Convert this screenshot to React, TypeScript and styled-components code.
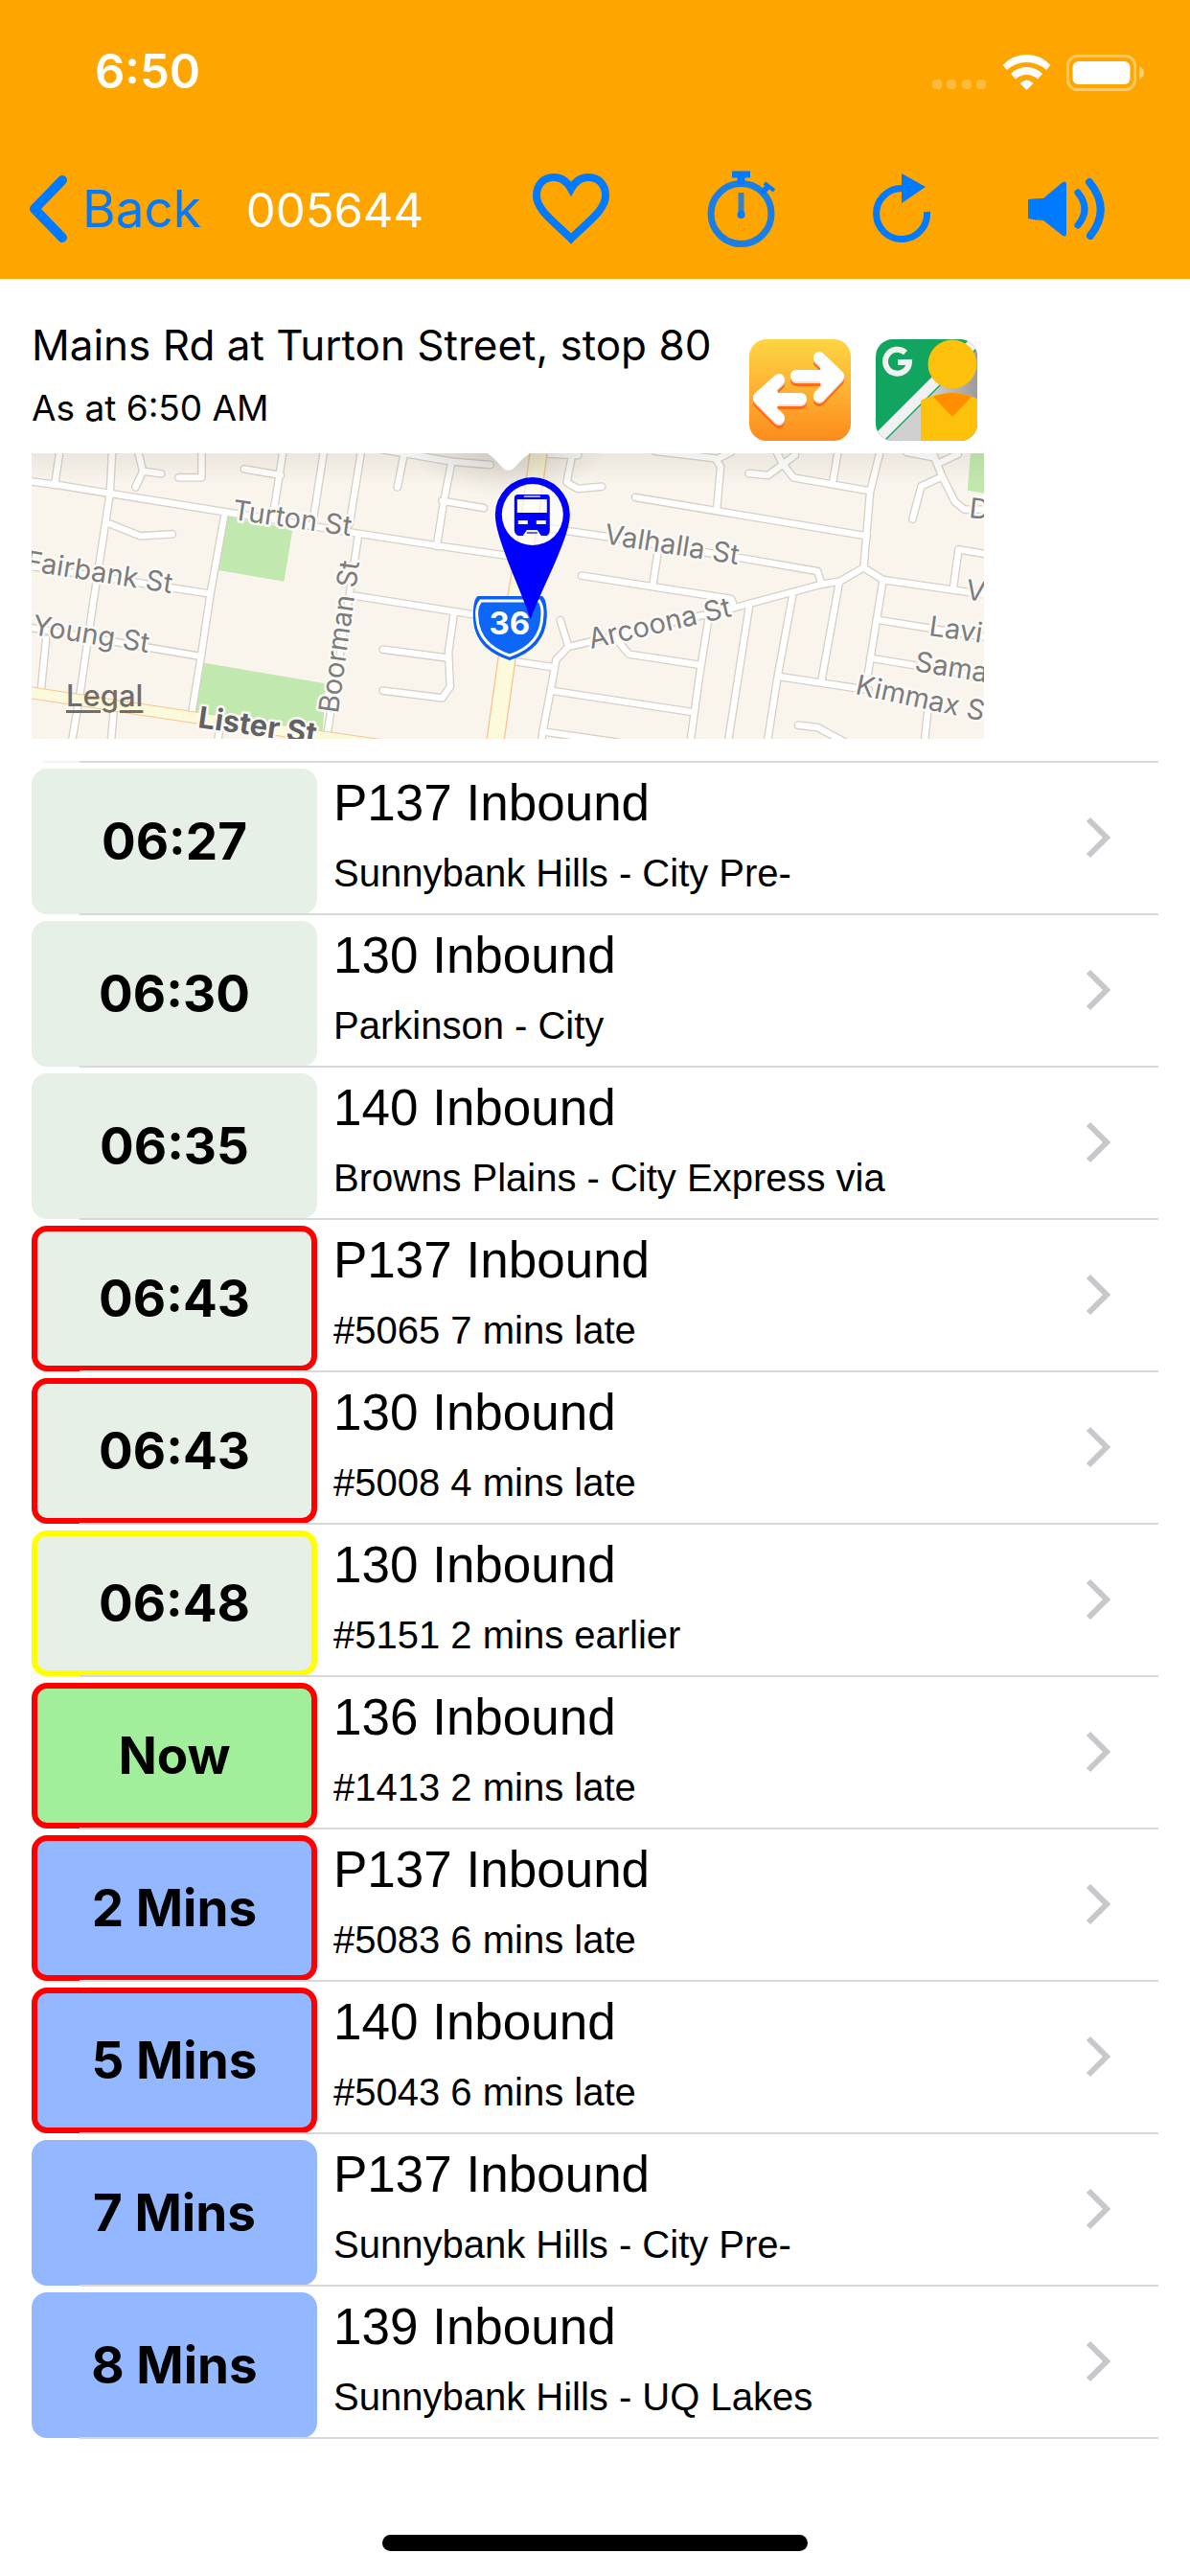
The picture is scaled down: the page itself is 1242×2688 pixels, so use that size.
import React from "react";
import styled, { createGlobalStyle } from "styled-components";

interface Departure {
  due: string;
  route: string;
  detail: string;
  state: "past" | "now" | "soon";
  outline?: string;
}

const departures: Departure[] = [
  { due: "06:27", route: "P137 Inbound", detail: "Sunnybank Hills - City Pre-", state: "past" },
  { due: "06:30", route: "130 Inbound", detail: "Parkinson - City", state: "past" },
  { due: "06:35", route: "140 Inbound", detail: "Browns Plains - City Express via", state: "past" },
  { due: "06:43", route: "P137 Inbound", detail: "#5065 7 mins late", state: "past", outline: "#ff0000" },
  { due: "06:43", route: "130 Inbound", detail: "#5008 4 mins late", state: "past", outline: "#ff0000" },
  { due: "06:48", route: "130 Inbound", detail: "#5151 2 mins earlier", state: "past", outline: "#ffff00" },
  { due: "Now", route: "136 Inbound", detail: "#1413 2 mins late", state: "now", outline: "#ff0000" },
  { due: "2 Mins", route: "P137 Inbound", detail: "#5083 6 mins late", state: "soon", outline: "#ff0000" },
  { due: "5 Mins", route: "140 Inbound", detail: "#5043 6 mins late", state: "soon", outline: "#ff0000" },
  { due: "7 Mins", route: "P137 Inbound", detail: "Sunnybank Hills - City Pre-", state: "soon" },
  { due: "8 Mins", route: "139 Inbound", detail: "Sunnybank Hills - UQ Lakes", state: "soon" },
];

const stateColors = {
  past: "#e6f0e6",
  now: "#a1ee9b",
  soon: "#94b8ff",
};

const GlobalStyle = createGlobalStyle`
  * {
    box-sizing: border-box;
  }
  body {
    margin: 0;
    background: #fff;
    color: #000;
    font-family: Inter, "Liberation Sans", sans-serif;
  }
`;

const Page = styled.div`
  min-height: 100vh;
  display: flex;
  flex-direction: column;
`;

const Header = styled.header`
  background: #ffa500;
  padding-bottom: 6px;
`;

const StatusBar = styled.div`
  height: 150px;
  padding: 0 47px 0 99px;
  display: flex;
  align-items: center;
  justify-content: space-between;
  color: #fff;
`;

const Clock = styled.span`
  font-size: 49px;
  line-height: 60px;
  font-weight: 600;
`;

const NavBar = styled.nav`
  height: 135px;
  padding: 0 89px 0 30px;
  display: flex;
  align-items: center;
`;

const BackButton = styled.button`
  display: flex;
  align-items: center;
  gap: 15px;
  padding: 0;
  border: 0;
  background: none;
  color: #007aff;
  font-family: inherit;
  font-size: 53px;
  line-height: 60px;
`;

const StopNumber = styled.h1`
  margin: 0 0 0 47px;
  padding-top: 4px;
  color: #fff;
  font-size: 49px;
  line-height: 60px;
  font-weight: 400;
`;

const Actions = styled.div`
  margin-left: auto;
  display: flex;
  align-items: center;
  gap: 102px;
`;

const IconButton = styled.button`
  display: flex;
  padding: 0;
  border: 0;
  background: none;
  color: #007aff;
`;

const StopPanel = styled.section`
  width: 80%;
  margin-left: 33px;
`;

const StopHead = styled.div`
  display: flex;
  align-items: flex-end;
  justify-content: space-between;
  padding: 41px 7px 13px 0;
`;

const StopText = styled.div`
  padding-bottom: 12px;
`;

const StopName = styled.h2`
  margin: 0 0 16px;
  font-size: 44px;
  line-height: 56px;
  font-weight: 400;
  white-space: nowrap;
`;

const AsAt = styled.p`
  margin: 0;
  font-size: 37px;
  line-height: 44px;
`;

const AppButtons = styled.div`
  display: flex;
  gap: 26px;
`;

const MapBox = styled.div`
  position: relative;
  height: 298px;
  overflow: hidden;
  background: #f9f4ec;

  svg {
    display: block;
    width: 100%;
    height: 100%;
  }
`;

const LegalLink = styled.a`
  position: absolute;
  left: 36px;
  bottom: 26px;
  color: #6f6d69;
  font-size: 31px;
  line-height: 38px;
  font-weight: 500;
  text-underline-offset: 4px;
`;

const MapLabel = styled.text<{ $major?: boolean }>`
  font-family: Inter, sans-serif;
  font-size: ${(p) => (p.$major ? 31 : 29)}px;
  font-weight: ${(p) => (p.$major ? 700 : 400)};
  fill: ${(p) => (p.$major ? "#626262" : "#7c7c7c")};
  stroke: #fcfaf6;
  stroke-width: 5px;
  stroke-linejoin: round;
  paint-order: stroke;
`;

const ShieldLabel = styled.text`
  font-family: Inter, sans-serif;
  font-size: 33px;
  font-weight: 700;
  fill: #fff;
`;

const DepartureList = styled.ul`
  list-style: none;
  margin: 23px 33px 0;
  padding: 0;

  &::before {
    content: "";
    display: block;
    height: 2px;
    background: linear-gradient(
      to right,
      transparent 12px,
      #eef5ee 12px 50px,
      #dadada 50px
    );
  }
`;

const DepartureRow = styled.li`
  position: relative;
  height: 159px;

  &::after {
    content: "";
    position: absolute;
    left: 50px;
    right: 0;
    bottom: 0;
    height: 2px;
    background: #d8d8da;
  }
`;

const RowLink = styled.a`
  display: flex;
  align-items: flex-start;
  padding: 6px 50px 0 0;
  color: inherit;
  text-decoration: none;
`;

const DueBadge = styled.div<{ $state: Departure["state"]; $outline?: string }>`
  width: 298px;
  height: 152px;
  flex: none;
  display: flex;
  align-items: center;
  justify-content: center;
  border: 6px solid ${(p) => p.$outline || stateColors[p.$state]};
  border-radius: 16px;
  background: ${(p) => stateColors[p.$state]};
  font-size: 53px;
  line-height: 60px;
  font-weight: 700;
`;

const RowText = styled.div`
  flex: 1;
  padding: 6px 0 0 17px;
  font-family: "Liberation Sans", Arial, sans-serif;
`;

const RouteName = styled.div`
  font-size: 53px;
  line-height: 60px;
`;

const Detail = styled.div`
  margin-top: 20px;
  font-size: 40px;
  line-height: 46px;
`;

const Disclosure = styled.svg`
  margin-top: 50px;
  flex: none;
`;

const HomeIndicator = styled.div`
  width: 444px;
  height: 17px;
  margin: auto auto 26px;
  border-radius: 9px;
  background: #000;
`;

const StatusIcons = () => (
  <svg width="222" height="40" viewBox="0 0 222 40" aria-hidden="true">
    <g fill="#fff" fillOpacity="0.25">
      <rect x="0" y="28" width="10" height="10" rx="4" />
      <rect x="15" y="28" width="10" height="10" rx="4" />
      <rect x="31" y="28" width="10" height="10" rx="4" />
      <rect x="46" y="28" width="10" height="10" rx="4" />
    </g>
    <g fill="#fff">
      <path d="M73.500 13 Q84 2 98.500 2 Q113 2 123.500 13 L119 18 Q110 10 98.500 10 Q87 10 78 18 Z" />
      <path d="M82 22 Q89 15 98.500 15 Q108 15 115 22 L110 27.500 Q105 23 98.500 23 Q92 23 87 27.500 Z" />
      <path d="M91.500 32 Q98.500 25 105.500 32 L98.500 39 Z" />
      <rect x="146.500" y="9" width="60" height="24" rx="6" />
    </g>
    <rect x="141.500" y="3.500" width="70" height="35" rx="10" fill="none" stroke="#fff" strokeOpacity="0.4" strokeWidth="3" />
    <path d="M216 14 Q221 16 221 21 Q221 26 216 28 Z" fill="#fff" fillOpacity="0.45" />
  </svg>
);

const HeartIcon = () => (
  <svg width="80" height="74" viewBox="0 0 80 74" fill="none" stroke="currentColor" strokeWidth="8">
    <path d="M40 16 C35 7 28 4 22 4 C11 4 4 12 4 23 C4 38 22 50 40 68 C58 50 76 38 76 23 C76 12 69 4 58 4 C52 4 45 7 40 16 Z" />
  </svg>
);

const StopwatchIcon = () => (
  <svg width="71" height="80" viewBox="0 0 71 80" fill="none" stroke="currentColor">
    <circle cx="35.500" cy="45" r="31.500" strokeWidth="7" opacity="0.9" />
    <path d="M26 4 H45" strokeWidth="7" />
    <path d="M35.500 6 V14" strokeWidth="8" />
    <path d="M57 24 L64 16" strokeWidth="6" />
    <path d="M60 13 L70 21" strokeWidth="4" />
    <path d="M35.500 23 V46" strokeWidth="6" opacity="0.8" />
    <circle cx="35.500" cy="46" r="4" fill="currentColor" stroke="none" />
  </svg>
);

const RefreshIcon = () => (
  <svg width="60" height="73" viewBox="0 0 60 73">
    <path d="M30 15.500 A26.500 26.500 0 1 0 56.500 40" fill="none" stroke="currentColor" strokeWidth="7" />
    <path d="M30 0 L55 14 L30 31 Z" fill="currentColor" />
  </svg>
);

const SpeakerIcon = () => (
  <svg width="80" height="66" viewBox="0 0 80 66">
    <path d="M0 23 Q8 22 16 22 L35 6 Q40 2 40 8 V58 Q40 64 35 60 L16 45 Q8 45 0 43 Z" fill="currentColor" />
    <path d="M52 16 Q66 33 52 50" fill="none" stroke="currentColor" strokeWidth="7" strokeLinecap="round" />
    <path d="M64 5 Q87 33 65 61" fill="none" stroke="currentColor" strokeWidth="8" strokeLinecap="round" />
  </svg>
);

const SwapIcon = () => (
  <svg width="106" height="106" viewBox="0 0 106 106">
    <defs>
      <linearGradient id="swapBg" x1="0" y1="0" x2="0" y2="1">
        <stop offset="0" stopColor="#fed541" />
        <stop offset="0.5" stopColor="#fdb132" />
        <stop offset="1" stopColor="#fb8b1c" />
      </linearGradient>
    </defs>
    <rect width="106" height="106" rx="18" fill="url(#swapBg)" />
    <g fill="none" strokeWidth="12" strokeLinecap="round" strokeLinejoin="round">
      <g stroke="#ff6a13" transform="translate(0 5)">
        <path d="M49 38 H88 M73 19 L93 38 L73 59" />
        <path d="M54 62 H16 M31 42 L10 61 L31 82" />
      </g>
      <g stroke="#e3e0e4" transform="translate(0 2)">
        <path d="M49 38 H88 M73 19 L93 38 L73 59" />
        <path d="M54 62 H16 M31 42 L10 61 L31 82" />
      </g>
      <g stroke="#fff">
        <path d="M49 38 H88 M73 19 L93 38 L73 59 M80 32 L86 38 L80 45" />
        <path d="M54 62 H16 M31 42 L10 61 L31 82 M24 56 L18 61 L24 68" />
      </g>
    </g>
  </svg>
);

const StreetViewIcon = () => (
  <svg width="106" height="106" viewBox="0 0 106 106">
    <defs>
      <clipPath id="svClip">
        <rect width="106" height="106" rx="18" />
      </clipPath>
      <linearGradient id="svShade" x1="0" y1="0" x2="1" y2="0">
        <stop offset="0.5" stopColor="#d0d0d0" />
        <stop offset="1" stopColor="#9b9b9b" />
      </linearGradient>
    </defs>
    <g clipPath="url(#svClip)">
      <rect width="106" height="106" fill="#11a55f" />
      <path d="M10 106 L106 10 V106 Z" fill="url(#svShade)" />
      <path d="M0 98 L98 0 L106 8 L8 106 H0 Z" fill="#f1f1f1" />
      <path d="M47 106 V64 Q62 56 80 56 Q98 56 112 66 V106 Z" fill="#fdc00b" />
      <path d="M60 60 Q80 52 100 60 L80 81 Z" fill="#ff8f00" />
      <circle cx="80" cy="26" r="25.500" fill="#fdc00b" />
      <path d="M31 14 A12.500 12.500 0 1 0 35 24 H23" fill="none" stroke="#f1f1f1" strokeWidth="6" />
    </g>
  </svg>
);

// minor streets, in map tile units (three to a pixel)
const westStreets = [
  "M20 125 L120 138 L285 165 L660 225 L1060 290 L1310 328 L1560 364",
  "M128 30 L112 138",
  "M292 30 L285 165 L235 490 L190 800 L165 945",
  "M372 30 L388 95 L365 145 M388 95 L445 103",
  "M572 30 V115 H500",
  "M705 88 L820 108 M827 30 L815 110 L795 235",
  "M955 30 L920 255",
  "M1072 30 L1035 260 M1062 300 L1035 480 L965 920",
  "M645 225 L600 475 L570 675 L540 860",
  "M285 260 L380 298 L480 292",
  "M20 390 L595 478",
  "M20 582 L570 675",
  "M85 620 L68 790",
  "M298 830 L288 945",
  "M628 900 L622 945",
  "M1205 45 L1185 145 M1140 28 L1355 65 L1475 75",
  "M1355 65 L1330 190 L1308 330 M1325 188 L1455 210",
  "M1050 485 L1500 556",
  "M1362 540 L1345 660 L1350 770 L1325 805 L1140 782 M1140 653 L1345 680",
];

const eastStreets = [
  "M130 40 L250 45 M230 55 L215 130 L250 150 L325 143",
  "M490 32 L680 55 L697 80 L685 215 M690 55 L730 35",
  "M430 177 L1155 298",
  "M100 265 L340 300 L780 370 L1000 408 L1012 445",
  "M500 350 L485 450",
  "M262 422 L730 495 L740 520",
  "M195 562 L220 642",
  "M60 692 L170 708 M135 945 L140 910 L165 780 L182 685 L220 645 L730 525 L1010 450 L1070 440 L1145 397 L1205 435 L1530 482",
  "M165 782 L615 850 M140 910 L380 945",
  "M660 550 L630 740 L602 945 M370 620 L410 668 L635 702",
  "M787 515 L720 945",
  "M922 485 L875 740 L843 945",
  "M1068 445 L1012 755",
  "M880 738 L1160 780",
  "M1205 437 L1155 750",
  "M1185 560 L1530 615 M1165 680 L1530 740",
  "M1425 465 L1442 340 L1530 355",
  "M1197 30 L1165 160 L1145 397",
  "M785 102 L845 108 L890 75 L930 45 M870 30 L890 70 L925 115 L1165 157 M1065 30 L1048 130",
  "M1298 245 L1325 142 L1390 112 M1358 30 L1390 110 L1430 190 L1460 215 L1530 215 M1380 70 L1440 42 M1280 36 L1365 52",
  "M940 890 L1000 897 L1090 945",
  "M1345 850 L1335 945",
];

const StopMap = () => (
  <svg viewBox="0 0 994 298" preserveAspectRatio="xMidYMid slice" role="img" aria-label="Map of the stop">
    <defs>
      <linearGradient id="mapShade" x1="0" y1="0" x2="0" y2="1">
        <stop offset="0" stopColor="#6b665c" stopOpacity="0.1" />
        <stop offset="1" stopColor="#6b665c" stopOpacity="0" />
      </linearGradient>
      <radialGradient id="calloutShade">
        <stop offset="0" stopColor="#6b665c" stopOpacity="0.25" />
        <stop offset="1" stopColor="#6b665c" stopOpacity="0" />
      </radialGradient>
    </defs>
    <g transform="translate(-13 -13) scale(0.33333)">
      <path d="M655 238 L857 275 L830 440 L622 405 Z" fill="#c1e8ae" />
      <path d="M580 695 L960 760 L950 925 L550 865 Z" fill="#c1e8ae" />
      <path d="M2980 30 H3040 V168 L2970 155 Z" fill="#c1e8ae" />
      <g fill="none" strokeLinecap="round" strokeLinejoin="round">
        <g stroke="#d8d0c5" strokeWidth="27">
          {westStreets.map((d) => (
            <path key={d} d={d} />
          ))}
          <g transform="translate(1500 0)">
            {eastStreets.map((d) => (
              <path key={d} d={d} />
            ))}
          </g>
        </g>
        <g stroke="#fff" strokeWidth="19">
          {westStreets.map((d) => (
            <path key={d} d={d} />
          ))}
          <g transform="translate(1500 0)">
            {eastStreets.map((d) => (
              <path key={d} d={d} />
            ))}
          </g>
        </g>
        <path d="M20 786 L540 865 L920 922 L1200 962" stroke="#f6c594" strokeWidth="38" />
        <path d="M20 786 L540 865 L920 922 L1200 962" stroke="#fdfadb" strokeWidth="32" />
        <path d="M1629 20 L1600 240 L1545 560 L1490 950" stroke="#f6c594" strokeWidth="58" />
        <path d="M1629 20 L1600 240 L1545 560 L1490 950" stroke="#fdfadb" strokeWidth="50" />
      </g>
    </g>
    <rect width="994" height="32" fill="url(#mapShade)" />
    <ellipse cx="498" cy="0" rx="100" ry="46" fill="url(#calloutShade)" />
    <path d="M476 0 Q482 4 490 13 Q498 23 506 13 Q514 4 520 0 Z" fill="#fff" />

    <MapLabel transform="translate(209 69) rotate(8)">Turton St</MapLabel>
    <MapLabel transform="translate(-7 122) rotate(9)">Fairbank St</MapLabel>
    <MapLabel transform="translate(0 189) rotate(9)">Young St</MapLabel>
    <MapLabel transform="translate(320 272) rotate(-82)">Boorman St</MapLabel>
    <MapLabel $major transform="translate(173 286) rotate(8)">
      Lister St
    </MapLabel>
    <MapLabel transform="translate(597 94) rotate(9)">Valhalla St</MapLabel>
    <MapLabel transform="translate(584 204) rotate(-13)">Arcoona St</MapLabel>
    <MapLabel transform="translate(978 67) rotate(6)">D</MapLabel>
    <MapLabel transform="translate(974 152) rotate(9)">Va</MapLabel>
    <MapLabel transform="translate(936 190) rotate(8)">Lavi</MapLabel>
    <MapLabel transform="translate(921 227) rotate(9)">Sama</MapLabel>
    <MapLabel transform="translate(859 251) rotate(12)">Kimmax S</MapLabel>

    <path d="M466 149 H533 Q538 152 538 170 Q537 204 499 216 Q461 204 461 170 Q461 152 466 149 Z" fill="#0a5ff0" />
    <path d="M469 154 H530 Q534 160 533 170 Q532 200 499 211 Q466 200 465 170 Q464 160 469 154 Z" fill="#0d66f5" stroke="#fff" strokeWidth="3" />
    <ShieldLabel x="499" y="189" textAnchor="middle">
      36
    </ShieldLabel>

    <circle cx="523" cy="64" r="34" fill="#fff" fillOpacity="0.6" />
    <path
      fillRule="evenodd"
      d="M484 64 A39 39 0 0 1 562 64 C562 88 534 138 521 173 C509 138 484 88 484 64 Z M491 64 A32 32 0 0 0 555 64 A32 32 0 0 0 491 64 Z"
      fill="#0000fe"
    />
    <path
      fillRule="evenodd"
      d="M508 43 H538 Q541 43 541 47 V80 Q541 84 538 86 L532 86 L528 80 H517 L513 86 H508 Q504 84 504 80 V47 Q504 43 508 43 Z M507 48 V62 H538 V48 Z M508 70 V74 H518 V70 Z M527 70 V74 H537 V70 Z"
      fill="#0000fe"
    />
    <path d="M514 45 H531" stroke="#a9a9ff" strokeWidth="2" />
    <path d="M517 83 H528" stroke="#5f5fff" strokeWidth="2" />
  </svg>
);

const App: React.FC = () => (
  <Page>
    <GlobalStyle />
    <Header>
      <StatusBar>
        <Clock>6:50</Clock>
        <StatusIcons />
      </StatusBar>
      <NavBar>
        <BackButton type="button">
          <svg width="41" height="70" viewBox="0 0 41 70" fill="none" stroke="currentColor" strokeWidth="10">
            <path d="M35 5 L6 35 L35 65" strokeLinecap="round" strokeLinejoin="round" />
          </svg>
          Back
        </BackButton>
        <StopNumber>005644</StopNumber>
        <Actions>
          <IconButton type="button" aria-label="Favourite">
            <HeartIcon />
          </IconButton>
          <IconButton type="button" aria-label="Timer">
            <StopwatchIcon />
          </IconButton>
          <IconButton type="button" aria-label="Refresh">
            <RefreshIcon />
          </IconButton>
          <IconButton type="button" aria-label="Speak">
            <SpeakerIcon />
          </IconButton>
        </Actions>
      </NavBar>
    </Header>

    <StopPanel>
      <StopHead>
        <StopText>
          <StopName>Mains Rd at Turton Street, stop 80</StopName>
          <AsAt>As at 6:50 AM</AsAt>
        </StopText>
        <AppButtons>
          <IconButton type="button" aria-label="Swap direction">
            <SwapIcon />
          </IconButton>
          <IconButton type="button" aria-label="Street view">
            <StreetViewIcon />
          </IconButton>
        </AppButtons>
      </StopHead>
      <MapBox>
        <StopMap />
        <LegalLink href="#legal">Legal</LegalLink>
      </MapBox>
    </StopPanel>

    <DepartureList>
      {departures.map((item, index) => (
        <DepartureRow key={index}>
          <RowLink href="#trip">
            <DueBadge $state={item.state} $outline={item.outline}>
              {item.due}
            </DueBadge>
            <RowText>
              <RouteName>{item.route}</RouteName>
              <Detail>{item.detail}</Detail>
            </RowText>
            <Disclosure width="26" height="44" viewBox="0 0 26 44" fill="none" stroke="#c7c7cc" strokeWidth="6">
              <path d="M3 3 L22 22 L3 41" />
            </Disclosure>
          </RowLink>
        </DepartureRow>
      ))}
    </DepartureList>

    <HomeIndicator />
  </Page>
);

export default App;
